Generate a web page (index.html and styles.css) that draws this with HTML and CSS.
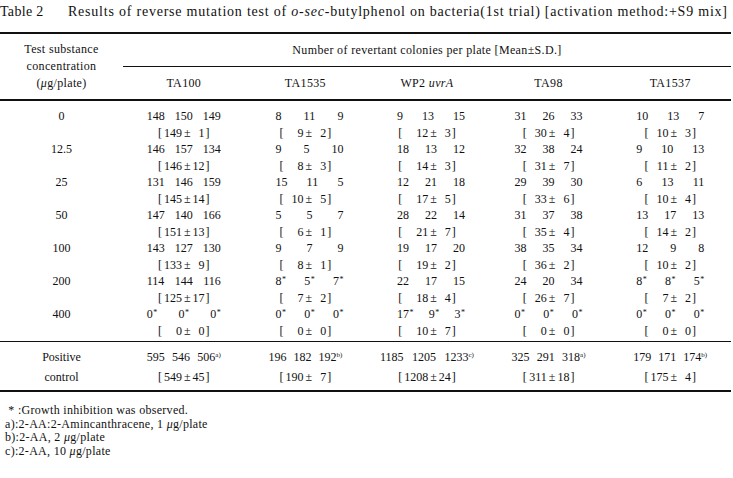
FILE: index.html
```html
<!DOCTYPE html>
<html lang="en">
<head>
<meta charset="utf-8">
<title>Table 2</title>
<link rel="stylesheet" href="styles.css">
</head>
<body>
<div class="page">
  <p class="title"><span class="label">Table 2</span>Results of reverse mutation test of <i>o</i>-<i>sec</i>-butylphenol on bacteria(1st trial) [activation method:+S9 mix]</p>
  <table class="results">
    <colgroup>
      <col class="c-conc">
      <col class="c-strain"><col class="c-strain"><col class="c-strain"><col class="c-strain"><col class="c-strain">
    </colgroup>
    <thead>
      <tr class="h1">
        <th rowspan="2" class="conc-head">Test substance<br>concentration<br>(<i>μ</i>g/plate)</th>
        <th colspan="5" class="group">Number of revertant colonies per plate [Mean±S.D.]</th>
      </tr>
      <tr class="h2">
        <th>TA100</th><th>TA1535</th><th>WP2 <i>uvrA</i></th><th>TA98</th><th>TA1537</th>
      </tr>
    </thead>
    <tbody class="data">
      <tr class="cnt"><td>0</td>
        <td><div class="tri w3"><span>148</span><span>150</span><span>149</span></div></td>
        <td><div class="tri sh"><span>8</span><span>11</span><span>9</span></div></td>
        <td><div class="tri sh"><span>9</span><span>13</span><span>15</span></div></td>
        <td><div class="tri"><span>31</span><span>26</span><span>33</span></div></td>
        <td><div class="tri"><span>10</span><span>13</span><span>7</span></div></td></tr>
      <tr class="mean"><td></td>
        <td><div class="mn">[<span class="m">149</span>±<span class="s">1</span>]</div></td>
        <td><div class="mn">[<span class="m">9</span>±<span class="s">2</span>]</div></td>
        <td><div class="mn">[<span class="m m4">12</span>±<span class="s">3</span>]</div></td>
        <td><div class="mn">[<span class="m">30</span>±<span class="s">4</span>]</div></td>
        <td><div class="mn">[<span class="m">10</span>±<span class="s">3</span>]</div></td></tr>

      <tr class="cnt"><td>12.5</td>
        <td><div class="tri w3"><span>146</span><span>157</span><span>134</span></div></td>
        <td><div class="tri sh"><span>9</span><span>5</span><span>10</span></div></td>
        <td><div class="tri sh"><span>18</span><span>13</span><span>12</span></div></td>
        <td><div class="tri"><span>32</span><span>38</span><span>24</span></div></td>
        <td><div class="tri"><span>9</span><span>10</span><span>13</span></div></td></tr>
      <tr class="mean"><td></td>
        <td><div class="mn">[<span class="m">146</span>±<span class="s">12</span>]</div></td>
        <td><div class="mn">[<span class="m">8</span>±<span class="s">3</span>]</div></td>
        <td><div class="mn">[<span class="m m4">14</span>±<span class="s">3</span>]</div></td>
        <td><div class="mn">[<span class="m">31</span>±<span class="s">7</span>]</div></td>
        <td><div class="mn">[<span class="m">11</span>±<span class="s">2</span>]</div></td></tr>

      <tr class="cnt"><td>25</td>
        <td><div class="tri w3"><span>131</span><span>146</span><span>159</span></div></td>
        <td><div class="tri sh"><span>15</span><span>11</span><span>5</span></div></td>
        <td><div class="tri sh"><span>12</span><span>21</span><span>18</span></div></td>
        <td><div class="tri"><span>29</span><span>39</span><span>30</span></div></td>
        <td><div class="tri"><span>6</span><span>13</span><span>11</span></div></td></tr>
      <tr class="mean"><td></td>
        <td><div class="mn">[<span class="m">145</span>±<span class="s">14</span>]</div></td>
        <td><div class="mn">[<span class="m">10</span>±<span class="s">5</span>]</div></td>
        <td><div class="mn">[<span class="m m4">17</span>±<span class="s">5</span>]</div></td>
        <td><div class="mn">[<span class="m">33</span>±<span class="s">6</span>]</div></td>
        <td><div class="mn">[<span class="m">10</span>±<span class="s">4</span>]</div></td></tr>

      <tr class="cnt"><td>50</td>
        <td><div class="tri w3"><span>147</span><span>140</span><span>166</span></div></td>
        <td><div class="tri sh"><span>5</span><span>5</span><span>7</span></div></td>
        <td><div class="tri sh"><span>28</span><span>22</span><span>14</span></div></td>
        <td><div class="tri"><span>31</span><span>37</span><span>38</span></div></td>
        <td><div class="tri"><span>13</span><span>17</span><span>13</span></div></td></tr>
      <tr class="mean"><td></td>
        <td><div class="mn">[<span class="m">151</span>±<span class="s">13</span>]</div></td>
        <td><div class="mn">[<span class="m">6</span>±<span class="s">1</span>]</div></td>
        <td><div class="mn">[<span class="m m4">21</span>±<span class="s">7</span>]</div></td>
        <td><div class="mn">[<span class="m">35</span>±<span class="s">4</span>]</div></td>
        <td><div class="mn">[<span class="m">14</span>±<span class="s">2</span>]</div></td></tr>

      <tr class="cnt"><td>100</td>
        <td><div class="tri w3"><span>143</span><span>127</span><span>130</span></div></td>
        <td><div class="tri sh"><span>9</span><span>7</span><span>9</span></div></td>
        <td><div class="tri sh"><span>19</span><span>17</span><span>20</span></div></td>
        <td><div class="tri"><span>38</span><span>35</span><span>34</span></div></td>
        <td><div class="tri"><span>12</span><span>9</span><span>8</span></div></td></tr>
      <tr class="mean"><td></td>
        <td><div class="mn">[<span class="m">133</span>±<span class="s">9</span>]</div></td>
        <td><div class="mn">[<span class="m">8</span>±<span class="s">1</span>]</div></td>
        <td><div class="mn">[<span class="m m4">19</span>±<span class="s">2</span>]</div></td>
        <td><div class="mn">[<span class="m">36</span>±<span class="s">2</span>]</div></td>
        <td><div class="mn">[<span class="m">10</span>±<span class="s">2</span>]</div></td></tr>

      <tr class="cnt"><td>200</td>
        <td><div class="tri w3"><span>114</span><span>144</span><span>116</span></div></td>
        <td><div class="tri sh"><span>8<sup class="ast">*</sup></span><span>5<sup class="ast">*</sup></span><span>7<sup class="ast">*</sup></span></div></td>
        <td><div class="tri sh"><span>22</span><span>17</span><span>15</span></div></td>
        <td><div class="tri"><span>24</span><span>20</span><span>34</span></div></td>
        <td><div class="tri"><span>8<sup class="ast">*</sup></span><span>8<sup class="ast">*</sup></span><span>5<sup class="ast">*</sup></span></div></td></tr>
      <tr class="mean"><td></td>
        <td><div class="mn">[<span class="m">125</span>±<span class="s">17</span>]</div></td>
        <td><div class="mn">[<span class="m">7</span>±<span class="s">2</span>]</div></td>
        <td><div class="mn">[<span class="m m4">18</span>±<span class="s">4</span>]</div></td>
        <td><div class="mn">[<span class="m">26</span>±<span class="s">7</span>]</div></td>
        <td><div class="mn">[<span class="m">7</span>±<span class="s">2</span>]</div></td></tr>

      <tr class="cnt"><td>400</td>
        <td><div class="tri w3"><span>0<sup class="ast">*</sup></span><span>0<sup class="ast">*</sup></span><span>0<sup class="ast">*</sup></span></div></td>
        <td><div class="tri sh"><span>0<sup class="ast">*</sup></span><span>0<sup class="ast">*</sup></span><span>0<sup class="ast">*</sup></span></div></td>
        <td><div class="tri sh"><span>17<sup class="ast">*</sup></span><span>9<sup class="ast">*</sup></span><span>3<sup class="ast">*</sup></span></div></td>
        <td><div class="tri"><span>0<sup class="ast">*</sup></span><span>0<sup class="ast">*</sup></span><span>0<sup class="ast">*</sup></span></div></td>
        <td><div class="tri"><span>0<sup class="ast">*</sup></span><span>0<sup class="ast">*</sup></span><span>0<sup class="ast">*</sup></span></div></td></tr>
      <tr class="mean last"><td></td>
        <td><div class="mn">[<span class="m">0</span>±<span class="s">0</span>]</div></td>
        <td><div class="mn">[<span class="m">0</span>±<span class="s">0</span>]</div></td>
        <td><div class="mn">[<span class="m m4">10</span>±<span class="s">7</span>]</div></td>
        <td><div class="mn">[<span class="m">0</span>±<span class="s">0</span>]</div></td>
        <td><div class="mn">[<span class="m">0</span>±<span class="s">0</span>]</div></td></tr>
    </tbody>
    <tbody class="positive">
      <tr class="cnt first"><td>Positive</td>
        <td><div class="tri w3"><span>595</span><span>546</span><span>506<sup class="fn">a)</sup></span></div></td>
        <td><div class="tri w3"><span>196</span><span>182</span><span>192<sup class="fn">b)</sup></span></div></td>
        <td><div class="tri w4"><span>1185</span><span>1205</span><span>1233<sup class="fn">c)</sup></span></div></td>
        <td><div class="tri w3"><span>325</span><span>291</span><span>318<sup class="fn">a)</sup></span></div></td>
        <td><div class="tri w3"><span>179</span><span>171</span><span>174<sup class="fn">b)</sup></span></div></td></tr>
      <tr class="mean"><td>control</td>
        <td><div class="mn">[<span class="m">549</span>±<span class="s">45</span>]</div></td>
        <td><div class="mn">[<span class="m">190</span>±<span class="s">7</span>]</div></td>
        <td><div class="mn">[<span class="m m4">1208</span>±<span class="s">24</span>]</div></td>
        <td><div class="mn">[<span class="m">311</span>±<span class="s">18</span>]</div></td>
        <td><div class="mn">[<span class="m">175</span>±<span class="s">4</span>]</div></td></tr>
    </tbody>
  </table>
  <div class="notes">
    <p>&nbsp;* :Growth inhibition was observed.</p>
    <p>a):2-AA:2-Amincanthracene, 1 <i>μ</i>g/plate</p>
    <p>b):2-AA, 2 <i>μ</i>g/plate</p>
    <p>c):2-AA, 10 <i>μ</i>g/plate</p>
  </div>
</div>
</body>
</html>
```

FILE: styles.css
```css
html, body {
  margin: 0;
  padding: 0;
  background: #ffffff;
}

body {
  font-family: "Liberation Serif", "Times New Roman", serif;
  color: #111111;
}

.page {
  width: 733px;
}

.title {
  margin: 0;
  padding-top: 3px;
  height: 29px;
  font-size: 14px;
  line-height: 18px;
  letter-spacing: 0.78px;
  white-space: nowrap;
}

.title .label {
  display: inline-block;
  width: 68px;
  letter-spacing: 0.3px;
}

.results {
  width: 731px;
  table-layout: fixed;
  border-collapse: collapse;
  font-size: 12px;
  border-top: 2px solid #111;
  border-bottom: 2px solid #111;
}

.c-conc {
  width: 123px;
}

.c-strain {
  width: 121.6px;
}

.results th,
.results td {
  padding: 0;
  font-weight: normal;
  text-align: center;
  vertical-align: middle;
}

.results thead th {
  letter-spacing: 0.35px;
}

.results thead tr.h1 th {
  height: 32px;
}

.results thead tr.h2 th {
  height: 32px;
}

.results thead {
  border-bottom: 2px solid #111;
}

.conc-head {
  line-height: 17px;
  padding-top: 1px;
}

.group {
  border-bottom: 1.5px solid #111;
  padding-top: 1px;
}

.results tbody td {
  line-height: 16.5px;
}

.results tbody.data tr:first-child td {
  padding-top: 7px;
}

.results tbody.data tr.last td {
  padding-bottom: 2px;
}

.results tbody.positive {
  border-top: 1.5px solid #111;
}

.results tbody.positive tr.first td {
  padding-top: 5px;
}

.results tbody.positive tr td {
  line-height: 20px;
}

.results tbody.positive tr.mean td {
  padding-bottom: 3px;
}

.tri {
  display: flex;
  justify-content: space-between;
  width: 68px;
  margin: 0 auto;
}

.tri.sh {
  padding-left: 8px;
}

.tri.w3 {
  width: 74px;
}

.tri.w4 {
  width: 94px;
}

.tri span {
  white-space: nowrap;
}

.ast {
  font-size: 8px;
  vertical-align: 3px;
  line-height: 0;
  margin-left: 0.5px;
}

.fn {
  font-size: 7px;
  vertical-align: 4px;
  line-height: 0;
}

.mn {
  white-space: nowrap;
}

.mn .m {
  display: inline-block;
  width: 3ch;
  text-align: right;
  margin-left: 2px;
  margin-right: 2px;
}

.mn .m.m4 {
  width: 4ch;
}

.mn .s {
  display: inline-block;
  width: 2ch;
  text-align: right;
  margin-left: 2px;
  margin-right: 1px;
}

.notes {
  padding: 12px 0 0 5px;
  font-size: 12px;
  line-height: 13.7px;
  letter-spacing: 0.3px;
}

.notes p {
  margin: 0;
}
```
